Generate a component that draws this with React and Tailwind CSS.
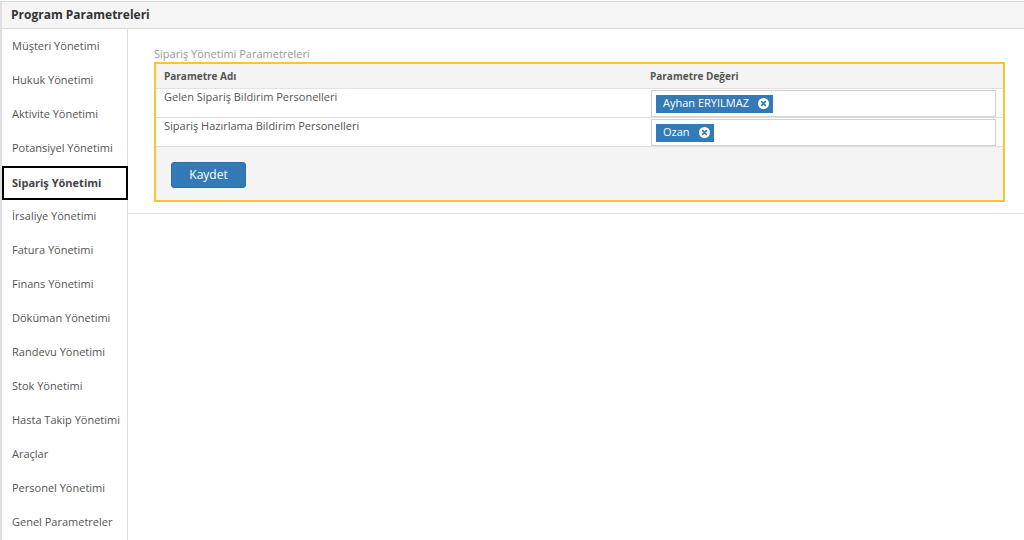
import React from 'react';

const menu = [
  'Müşteri Yönetimi',
  'Hukuk Yönetimi',
  'Aktivite Yönetimi',
  'Potansiyel Yönetimi',
  'Sipariş Yönetimi',
  'İrsaliye Yönetimi',
  'Fatura Yönetimi',
  'Finans Yönetimi',
  'Döküman Yönetimi',
  'Randevu Yönetimi',
  'Stok Yönetimi',
  'Hasta Takip Yönetimi',
  'Araçlar',
  'Personel Yönetimi',
  'Genel Parametreler',
];

const rows = [
  { name: 'Gelen Sipariş Bildirim Personelleri', tags: ['Ayhan ERYILMAZ'] },
  { name: 'Sipariş Hazırlama Bildirim Personelleri', tags: ['Ozan'] },
];

// küçük x ikonu (select2 tag kapatma)
const CloseDot = () => (
  <svg width="11" height="11" viewBox="0 0 12 12" className="ml-[9px] shrink-0">
    <circle cx="6" cy="6" r="6" fill="#fff" />
    <path d="M4 4 L8 8 M8 4 L4 8" stroke="#337ab7" strokeWidth="1.8" strokeLinecap="round" />
  </svg>
);

function App() {
  return (
    <div className="w-[1024px] h-[540px] overflow-hidden bg-white text-[11px] text-[#555]" style={{ fontFamily: '"Open Sans", "Liberation Sans", sans-serif' }}>
      {/* Başlık */}
      <div className="mt-px h-[28px] border-y border-[#d6d6d6] border-l-2 border-l-[#e0e0e0] bg-[#f6f6f6] flex items-center pl-[9px]">
        <span className="text-[12px] font-bold text-[#333]">Program Parametreleri</span>
      </div>

      <div className="flex h-[511px]">
        {/* Sol menü */}
        <div className="w-[128px] shrink-0 border-l-2 border-l-[#e0e0e0] border-r border-r-[#dcdcdc] pt-[1px]">
          {menu.map((m) => {
            const active = m === 'Sipariş Yönetimi';
            return (
              <div
                key={m}
                className={
                  active
                    ? 'h-[34px] -mr-px border-2 border-black flex items-center pl-[8px] font-bold text-[#444]'
                    : 'h-[34px] flex items-start pt-[8px] pl-[10px]'
                }
              >
                {m}
              </div>
            );
          })}
        </div>

        {/* İçerik */}
        <div className="flex-1">
          <div className="pl-[26px] pr-[19px] pt-[17px] pb-[11px] border-b border-[#e3e3e3]">
            <div className="text-[#999] mb-[1px] leading-[15px]">Sipariş Yönetimi Parametreleri</div>
            <div className="border-2 border-[#fbc531]">
              <div className="flex h-[25px] items-center bg-[#f4f4f4] border-b border-[#e2e2e2] font-bold text-[10px] text-[#555]">
                <div className="w-[486px] pl-[8px]">Parametre Adı</div>
                <div className="pl-[8px]">Parametre Değeri</div>
              </div>
              {rows.map((r) => (
                <div key={r.name} className="flex h-[29px] bg-white border-b border-[#dedede]">
                  <div className="w-[495px] pl-[8px]">{r.name}</div>
                  <div className="flex-1 pr-[7px] py-px">
                    <div className="h-[27px] border border-[#d2d2d2] flex items-center px-[4px]">
                      {r.tags.map((t) => (
                        <span key={t} className="h-[18px] bg-[#337ab7] text-white text-[11px] flex items-center pl-[7px] pr-[4px]">
                          {t}
                          <CloseDot />
                        </span>
                      ))}
                    </div>
                  </div>
                </div>
              ))}
              <div className="h-[53px] bg-[#f4f4f4] pl-[15px] pt-[15px]">
                <button className="w-[75px] h-[26px] rounded-[3px] bg-[#337ab7] border border-[#2e6da4] text-white text-[12px]">
                  Kaydet
                </button>
              </div>
            </div>
          </div>
        </div>
      </div>
    </div>
  );
}

export default App;
